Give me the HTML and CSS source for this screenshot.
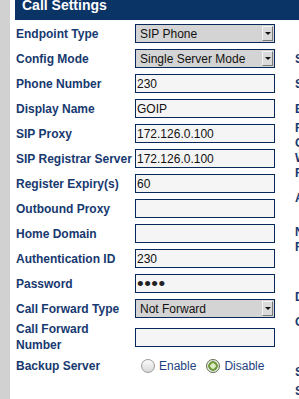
FILE: index.html
```html
<!DOCTYPE html>
<html lang="en">
<head>
  <meta charset="UTF-8">
  <meta name="viewport" content="width=device-width, initial-scale=1.0">
  <title>Call Settings</title>
  <link rel="stylesheet" href="styles.css">
</head>
<body>
  <div class="page">
    <div class="side"></div>

    <div class="main">
      <div class="title">Call Settings</div>

      <div class="content">
        <form class="settings">
          <div class="row">
            <label>Endpoint Type</label>
            <div class="select-wrap">
              <select><option>SIP Phone</option></select>
              <span class="arrow"></span>
            </div>
          </div>
          <div class="row">
            <label>Config Mode</label>
            <div class="select-wrap">
              <select><option>Single Server Mode</option></select>
              <span class="arrow"></span>
            </div>
          </div>
          <div class="row">
            <label>Phone Number</label>
            <input type="text" value="230">
          </div>
          <div class="row">
            <label>Display Name</label>
            <input type="text" value="GOIP">
          </div>
          <div class="row">
            <label>SIP Proxy</label>
            <input type="text" value="172.126.0.100">
          </div>
          <div class="row">
            <label>SIP Registrar Server</label>
            <input type="text" value="172.126.0.100">
          </div>
          <div class="row">
            <label>Register Expiry(s)</label>
            <input type="text" value="60">
          </div>
          <div class="row">
            <label>Outbound Proxy</label>
            <input type="text" value="">
          </div>
          <div class="row">
            <label>Home Domain</label>
            <input type="text" value="">
          </div>
          <div class="row">
            <label>Authentication ID</label>
            <input type="text" value="230">
          </div>
          <div class="row">
            <label>Password</label>
            <input type="password" class="password" value="1234">
          </div>
          <div class="row">
            <label>Call Forward Type</label>
            <div class="select-wrap">
              <select><option>Not Forward</option></select>
              <span class="arrow"></span>
            </div>
          </div>
          <div class="row row-tall">
            <label>Call Forward Number</label>
            <input type="text" value="">
          </div>
          <div class="row">
            <label>Backup Server</label>
            <div class="radios">
              <input type="radio" name="backup" id="backup-on">
              <label class="radio-label" for="backup-on">Enable</label>
              <input type="radio" name="backup" id="backup-off" checked>
              <label class="radio-label" for="backup-off">Disable</label>
            </div>
          </div>
        </form>

        <div class="help">
          <p>Single Server Mode</p>
          <p>Server</p>
          <p class="tight">Backup Server</p>
          <p>Register Expiry<br>Call Forward<br>When busy<br>Registrar</p>
          <p class="wide">Authentication</p>
          <p class="wider">No Answer<br>Forward</p>
          <p>Disable</p>
          <p class="wider">Codec</p>
          <p class="tight">Save</p>
          <p>Status</p>
        </div>
      </div>
    </div>
  </div>
</body>
</html>
```

FILE: styles.css
```css
/* Base */
html, body {
  margin: 0;
  padding: 0;
  background: #ffffff;
  font-family: "Liberation Sans", Arial, sans-serif;
  font-size: 12px;
  overflow: hidden;
}

.page {
  display: flex;
  width: 600px;
  min-height: 100vh;
}

/* Grey strip on the left */
.side {
  width: 10px;
  flex: none;
  background: #d1d1d1;
}

.main {
  flex: 1;
  margin-left: 5px;
}

/* Title bar */
.title {
  height: 20px;
  padding-left: 7px;
  background: #0b3466;
  color: #ffffff;
  font-size: 14px;
  font-weight: bold;
  line-height: 10px;
}

.content {
  display: flex;
  padding-top: 1px;
}

/* Form */
.settings {
  width: 260px;
  flex: none;
}

.row {
  display: flex;
  align-items: center;
  height: 25px;
}

.row-tall {
  height: 32px;
}

.row > label {
  width: 119px;
  flex: none;
  padding-left: 1px;
  color: #17396f;
  font-weight: bold;
  line-height: 16px;
}

.row input[type="text"],
.row input[type="password"] {
  box-sizing: border-box;
  width: 140px;
  height: 19px;
  margin: 0;
  padding: 0 1px;
  border: 1px solid #06295a;
  background: #f5f5f5;
  color: #111111;
  font-family: inherit;
  font-size: 12px;
}

.row input.password {
  font-size: 19px;
  letter-spacing: 0.5px;
  color: #222222;
}

/* Select with old style arrow button */
.select-wrap {
  position: relative;
  width: 140px;
  height: 19px;
}

.select-wrap select {
  appearance: none;
  -webkit-appearance: none;
  box-sizing: border-box;
  width: 140px;
  height: 19px;
  margin: 0;
  padding: 0 0 0 4px;
  border: 1px solid #06295a;
  border-radius: 0;
  background: #d4d4d4;
  color: #111111;
  font-family: inherit;
  font-size: 12px;
}

.arrow {
  position: absolute;
  top: 2px;
  right: 2px;
  box-sizing: border-box;
  width: 11px;
  height: 15px;
  background: #dadada;
  border-top: 1px solid #f4f4f4;
  border-left: 1px solid #f4f4f4;
  border-right: 1px solid #7a7a7a;
  border-bottom: 1px solid #7a7a7a;
  pointer-events: none;
}

.arrow::after {
  content: "";
  position: absolute;
  top: 5px;
  left: 2px;
  border-left: 3px solid transparent;
  border-right: 3px solid transparent;
  border-top: 3px solid #111111;
}

/* Radios */
.radios {
  display: flex;
  align-items: center;
}

.radios input[type="radio"] {
  appearance: none;
  -webkit-appearance: none;
  box-sizing: border-box;
  width: 14px;
  height: 14px;
  margin: 0 4px 0 6px;
  border: 1px solid #9a9a9a;
  border-radius: 50%;
  background: linear-gradient(#fbfbfb, #d8d8d8);
}

.radios input[type="radio"]:checked {
  border-color: #5f6f4a;
  background: radial-gradient(circle, #e4efcf 0, #d6e6b8 2.5px, #6f9a3c 3px, #6f9a3c 4.5px, #e8e8e8 5px);
}

.radio-label {
  color: #1d3f80;
  margin-right: 4px;
}

/* Help column on the right */
.help {
  margin-left: 20px;
  padding-top: 31px;
  width: 200px;
  color: #17396f;
  font-weight: bold;
  line-height: 15px;
}

.help p {
  margin: 0 0 10px;
}

.help p.tight {
  margin-bottom: 4px;
}

.help p.wide {
  margin-bottom: 19px;
}

.help p.wider {
  margin-bottom: 35px;
}
```
